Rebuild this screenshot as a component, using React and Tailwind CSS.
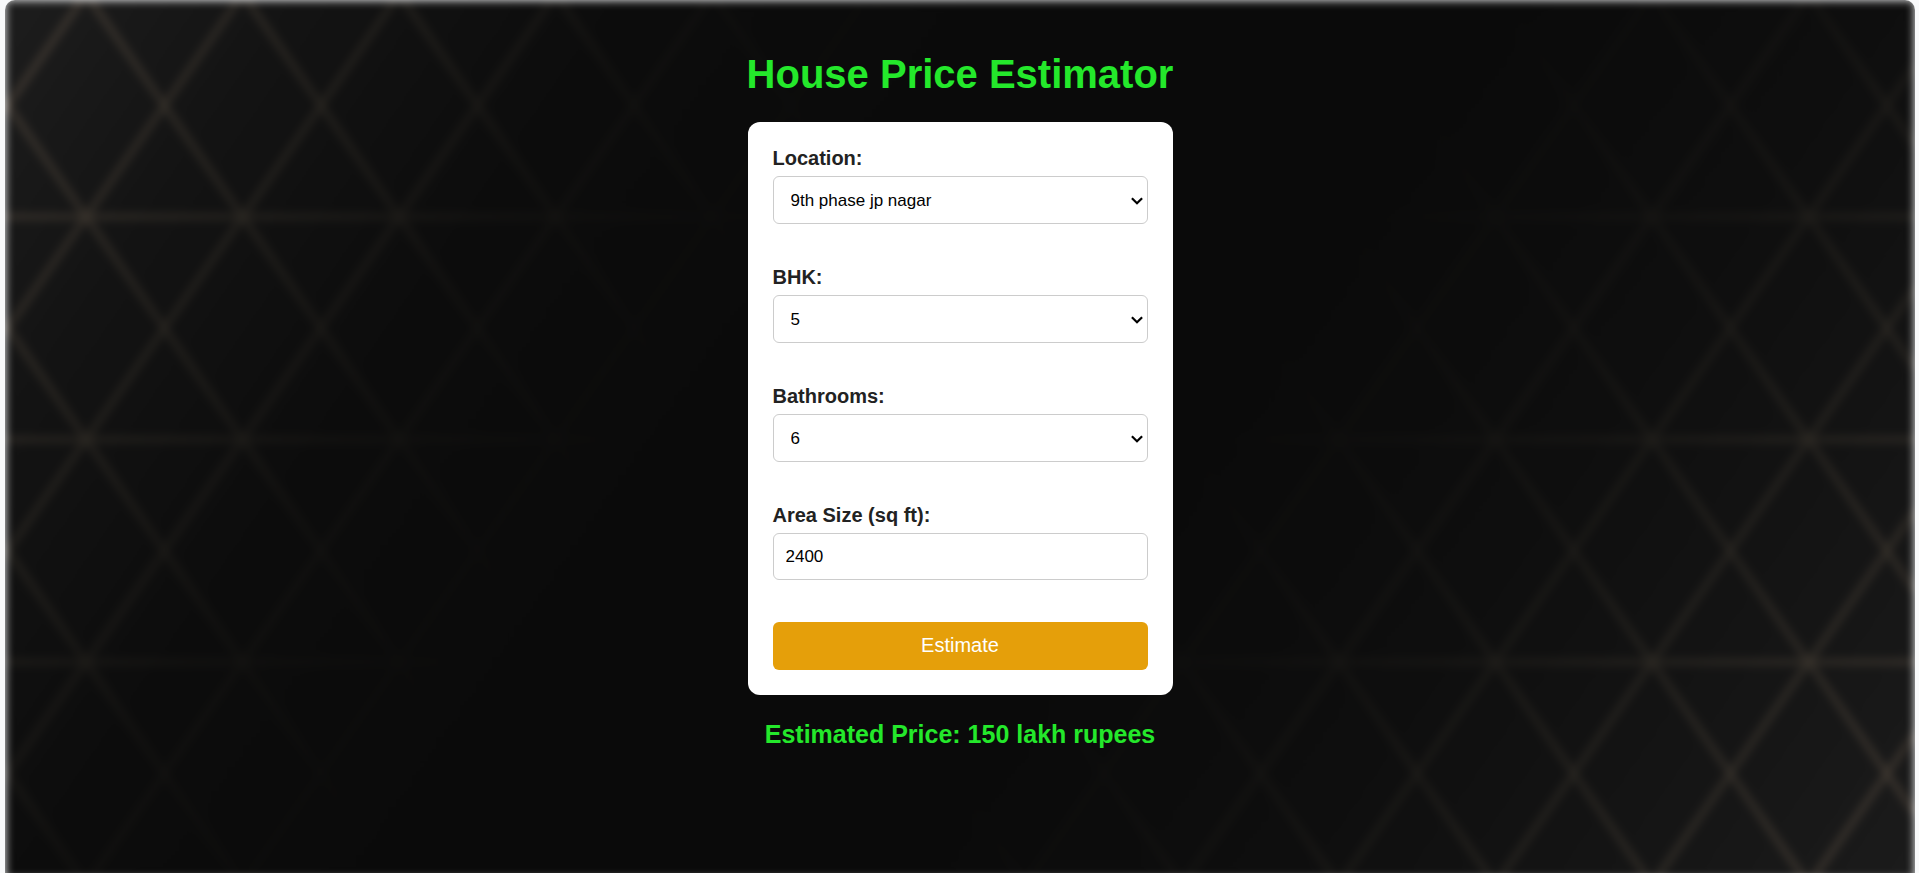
import { useState } from "react";

const STEP_X = 156.6;
const STEP_Y = 222.7;
const ORIGIN_X = 81;
const ORIGIN_Y = -6;

function buildLattice() {
  const parts = [];
  for (let r = 0; r <= 4; r++) {
    parts.push(`M-40 ${ORIGIN_Y + r * STEP_Y}H1960`);
  }
  const rise = STEP_Y * 5;
  const run = STEP_X * 5;
  for (let c = -6; c <= 18; c++) {
    const x = ORIGIN_X + c * STEP_X;
    parts.push(`M${x} ${ORIGIN_Y}l${run} ${rise}`);
    parts.push(`M${x} ${ORIGIN_Y}l${-run} ${rise}`);
  }
  return parts.join("");
}

const LATTICE = buildLattice();

function Backdrop() {
  return (
    <svg
      aria-hidden="true"
      className="absolute inset-x-0 top-0 -bottom-1.5 h-[calc(100%+6px)] w-full blur-[5px]"
      viewBox="0 0 1910 879"
      preserveAspectRatio="none"
    >
      <defs>
        <linearGradient id="base" gradientUnits="userSpaceOnUse" x1="0" y1="0" x2="1701" y2="1174">
          <stop offset="0" stopColor="#1d1d1d" />
          <stop offset="0.12" stopColor="#131313" />
          <stop offset="0.25" stopColor="#0c0c0c" />
          <stop offset="0.4" stopColor="#0a0a0a" />
          <stop offset="0.6" stopColor="#0a0a0a" />
          <stop offset="0.75" stopColor="#0e0e0e" />
          <stop offset="0.87" stopColor="#141414" />
          <stop offset="1" stopColor="#1b1b1b" />
        </linearGradient>
        <linearGradient id="lines" gradientUnits="userSpaceOnUse" x1="0" y1="0" x2="1701" y2="1174">
          <stop offset="0" stopColor="#8a7460" stopOpacity="0.44" />
          <stop offset="0.12" stopColor="#80705a" stopOpacity="0.28" />
          <stop offset="0.25" stopColor="#706650" stopOpacity="0.1" />
          <stop offset="0.38" stopColor="#605840" stopOpacity="0" />
          <stop offset="0.6" stopColor="#605840" stopOpacity="0" />
          <stop offset="0.75" stopColor="#706650" stopOpacity="0.12" />
          <stop offset="0.87" stopColor="#80705a" stopOpacity="0.27" />
          <stop offset="1" stopColor="#8a7460" stopOpacity="0.42" />
        </linearGradient>
      </defs>
      <rect width="1910" height="879" fill="url(#base)" />
      <path d={LATTICE} fill="none" stroke="url(#lines)" strokeWidth="5" />
    </svg>
  );
}

const controlClass =
  "w-full rounded-md border border-[#cccccc] bg-white text-[17px] text-black";

function Field({ id, label, children }) {
  return (
    <div className="flex flex-col gap-1.5">
      <label htmlFor={id} className="text-xl/[23px] font-bold text-[#222222]">
        {label}
      </label>
      {children}
    </div>
  );
}

function SelectField({ id, label, options, value, onChange }) {
  return (
    <Field id={id} label={label}>
      <div className="relative">
        <select
          id={id}
          value={value}
          onChange={(e) => onChange(e.target.value)}
          className={`${controlClass} block h-12 appearance-none pt-0.5 pr-6 pl-[17px]`}
        >
          {options.map((option) => (
            <option key={option}>{option}</option>
          ))}
        </select>
        <svg
          aria-hidden="true"
          className="pointer-events-none absolute top-[21px] right-[5px] h-2 w-3"
          viewBox="0 0 12 8"
          fill="none"
          stroke="#000000"
          strokeWidth="2.2"
        >
          <path d="M0.9 1.2L6 6.2L11.1 1.2" />
        </svg>
      </div>
    </Field>
  );
}

export default function App() {
  const [location, setLocation] = useState("9th phase jp nagar");
  const [bhk, setBhk] = useState("5");
  const [baths, setBaths] = useState("6");
  const [area, setArea] = useState("2400");

  return (
    <div className="min-h-screen bg-[#f8f9fa] pr-1 pl-[5px] font-['Liberation_Sans',Arial,sans-serif]">
      <main className="relative flex min-h-screen flex-col items-center overflow-hidden rounded-t-[10px] pt-[50px]">
        <Backdrop />
        <div className="relative flex w-[425px] flex-col items-center">
          <h1 className="text-[40px]/[48px] font-bold whitespace-nowrap text-[#24e82b]">
            House Price Estimator
          </h1>
          <form
            onSubmit={(e) => e.preventDefault()}
            className="mt-6 flex w-full flex-col gap-[42px] rounded-xl bg-white p-[25px]"
          >
            <SelectField
              id="location"
              label="Location:"
              options={["9th phase jp nagar"]}
              value={location}
              onChange={setLocation}
            />
            <SelectField
              id="bhk"
              label="BHK:"
              options={["1", "2", "3", "4", "5"]}
              value={bhk}
              onChange={setBhk}
            />
            <SelectField
              id="bathrooms"
              label="Bathrooms:"
              options={["1", "2", "3", "4", "5", "6"]}
              value={baths}
              onChange={setBaths}
            />
            <Field id="area" label="Area Size (sq ft):">
              <input
                id="area"
                type="text"
                inputMode="numeric"
                value={area}
                onChange={(e) => setArea(e.target.value)}
                className={`${controlClass} h-[47px] px-3`}
              />
            </Field>
            <button
              type="submit"
              className="h-12 w-full rounded-md bg-[#e59f0a] pb-0.5 text-xl text-white"
            >
              Estimate
            </button>
          </form>
          <h2 className="mt-6 text-[25px]/[30px] font-bold whitespace-nowrap text-[#24e82b]">
            Estimated Price: 150 lakh rupees
          </h2>
        </div>
      </main>
    </div>
  );
}
